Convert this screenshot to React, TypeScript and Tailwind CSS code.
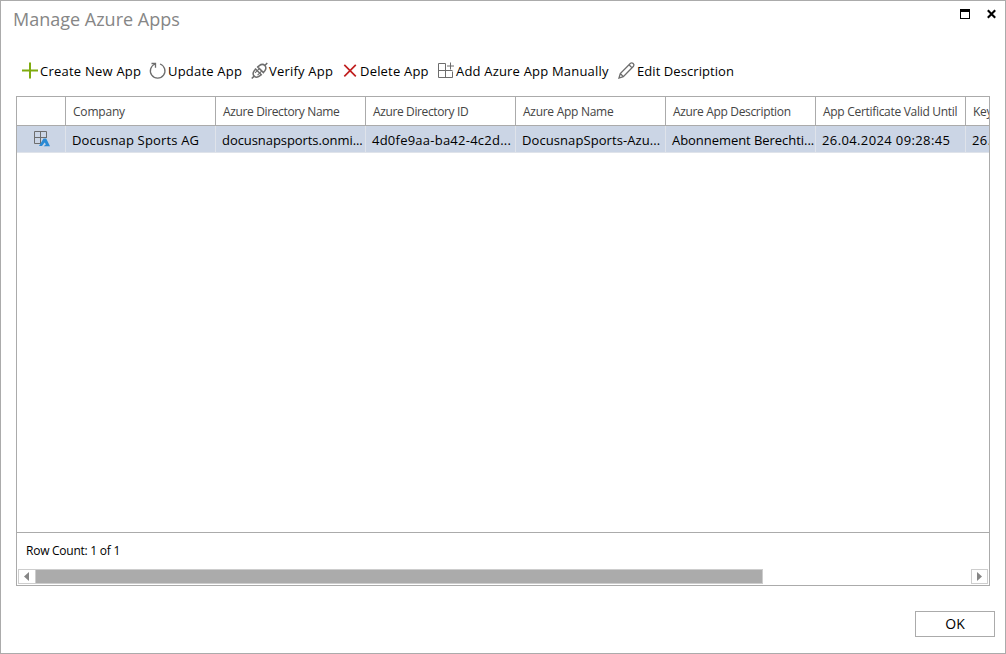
import type { ReactNode } from 'react';
import { clsx } from 'clsx';

type Action = { label: string; icon: ReactNode; iconClass: string; textClass: string };

type Column = { title: string; value: string; titleClass?: string; valueClass?: string };

const actions: Action[] = [
  { label: 'Create New App', icon: <PlusIcon />, iconClass: 'w-[19px]', textClass: 'w-[109px] tracking-[0.23px]' },
  { label: 'Update App', icon: <RefreshIcon />, iconClass: 'w-[19px]', textClass: 'w-[83px] tracking-[0.2px]' },
  { label: 'Verify App', icon: <PlugIcon />, iconClass: 'w-[18px]', textClass: 'w-[73px] tracking-[0.2px]' },
  { label: 'Delete App', icon: <CrossIcon />, iconClass: 'w-[18px]', textClass: 'w-[77px] tracking-[0.2px]' },
  { label: 'Add Azure App Manually', icon: <GridPlusIcon />, iconClass: 'w-[19px]', textClass: 'w-[162px] tracking-[0.19px]' },
  { label: 'Edit Description', icon: <PencilIcon />, iconClass: 'w-[19px]', textClass: 'w-[110px] tracking-[0.07px]' },
];

const columns: Column[] = [
  { title: 'Company', value: 'Docusnap Sports AG', titleClass: 'tracking-[-0.2px]', valueClass: 'tracking-[0.16px]' },
  { title: 'Azure Directory Name', value: 'docusnapsports.onmi...', titleClass: 'tracking-[-0.36px]', valueClass: 'tracking-[-0.07px]' },
  { title: 'Azure Directory ID', value: '4d0fe9aa-ba42-4c2d...', titleClass: 'tracking-[-0.38px]', valueClass: 'tracking-[0.24px]' },
  { title: 'Azure App Name', value: 'DocusnapSports-Azu...', titleClass: 'tracking-[-0.28px]', valueClass: 'tracking-[0.08px]' },
  { title: 'Azure App Description', value: 'Abonnement Berechti...', titleClass: 'tracking-[-0.34px]', valueClass: 'tracking-[-0.05px]' },
  { title: 'App Certificate Valid Until', value: '26.04.2024 09:28:45', titleClass: 'tracking-[-0.3px]', valueClass: 'tracking-[0.38px]' },
  { title: 'Key Valid Until', value: '26.04.2024 09:28:45', titleClass: 'tracking-[-0.3px]', valueClass: 'tracking-[0.38px]' },
];

export default function App() {
  return (
    <div className="flex h-[654px] w-[1006px] flex-col overflow-hidden border border-[#ababab] bg-white font-['Open_Sans','Noto_Sans',sans-serif] text-[13px] text-black">
      <TitleBar />
      <Toolbar />
      <AppGrid />
      <footer className="mt-[25px] flex justify-end pr-[10px]">
        <button className="h-[26px] w-[80px] border border-[#ababab] bg-white text-[14px] leading-[24px]">OK</button>
      </footer>
    </div>
  );
}

function TitleBar() {
  return (
    <header className="flex h-[38px] shrink-0 items-start justify-between pl-[12px]">
      <h1 className="pt-[6px] text-[18px] leading-6 text-[#868686]">Manage Azure Apps</h1>
      <div className="flex gap-[17px] pt-[8px] pr-[9px]">
        <button aria-label="Maximize">
          <svg className="block" width="10" height="10" shapeRendering="crispEdges">
            <path d="M.5 .5h9v9h-9z" fill="none" stroke="#000" />
            <path d="M0 0h10v3H0z" />
          </svg>
        </button>
        <button aria-label="Close">
          <svg className="block" width="9" height="10" viewBox="0 0 9 10">
            <path d="M.8 1.300l7.400 7.400M8.200 1.300L.8 8.700" stroke="#000" strokeWidth="2.100" />
          </svg>
        </button>
      </div>
    </header>
  );
}

function Toolbar() {
  return (
    <nav className="flex h-[57px] shrink-0 items-start pt-[22px] pl-[20px]">
      {actions.map((a) => (
        <button key={a.label} className="flex h-[20px] items-center text-left">
          <span className={clsx('shrink-0', a.iconClass)}>{a.icon}</span>
          <span className={clsx('shrink-0 whitespace-nowrap leading-5', a.textClass)}>{a.label}</span>
        </button>
      ))}
    </nav>
  );
}

function AppGrid() {
  return (
    <section className="ml-[15px] flex h-[490px] w-[974px] shrink-0 flex-col overflow-hidden border border-[#ababab]">
      <div className="flex h-[29px] shrink-0 overflow-hidden border-b border-[#ababab] text-[12px] text-[#444]">
        <div className="w-[49px] shrink-0 border-r border-[#ababab]" />
        {columns.map((c) => (
          <div
            key={c.title}
            className="w-[150px] shrink-0 whitespace-nowrap border-r border-[#ababab] pl-[7px] leading-[29px]"
          >
            <span className={c.titleClass}>{c.title}</span>
          </div>
        ))}
      </div>
      <div className="flex h-[27px] shrink-0 overflow-hidden border-b border-[#dfe3ea] bg-[#cbd5e5]">
        <div className="flex w-[49px] shrink-0 items-center justify-center border-r border-[#dfe3ea] pl-[2px]">
          <AzureAppIcon />
        </div>
        {columns.map((c) => (
          <div
            key={c.title}
            className="w-[150px] shrink-0 whitespace-nowrap border-r border-[#dfe3ea] pl-[6px] leading-[28px]"
          >
            <span className={c.valueClass}>{c.value}</span>
          </div>
        ))}
      </div>
      <div className="flex-1" />
      <div className="h-[37px] shrink-0 border-t border-[#ababab] pl-[9px] text-[12px] leading-[36px]">
        <span className="tracking-[-0.25px]">Row Count: 1 of 1</span>
      </div>
      <ScrollBar />
    </section>
  );
}

function ScrollBar() {
  return (
    <div className="mx-px mb-px flex h-[15px] shrink-0">
      <button aria-label="Scroll left" className="w-[17px] border border-r-0 border-[#cdcdcd]">
        <svg className="ml-[5px] block" width="5" height="9">
          <path d="M5 0v9L0 4.500z" fill="#868686" />
        </svg>
      </button>
      <div className="w-[728px] border border-[#cdcdcd] bg-[#ababab]" />
      <div className="flex-1" />
      <button aria-label="Scroll right" className="w-[17px] border border-[#cdcdcd]">
        <svg className="ml-[5px] block" width="5" height="9">
          <path d="M0 0v9l5-4.500z" fill="#868686" />
        </svg>
      </button>
    </div>
  );
}

/* Toolbar icons, all on a 17px grid */

function Icon({ children, color = '#6d6d6d' }: { children: ReactNode; color?: string }) {
  return (
    <svg className="relative -top-px block overflow-visible" width="17" height="17" viewBox="0 0 17 17" fill="none" stroke={color}>
      {children}
    </svg>
  );
}

function PlusIcon() {
  return (
    <Icon color="#7fab0f">
      <path d="M9 .5v16M1 8.500h16" strokeWidth="2" />
    </Icon>
  );
}

function RefreshIcon() {
  return (
    <Icon>
      <path d="M11 2A7.300 7.300 0 1 1 6.300 2" strokeWidth="1.300" />
      <path d="M2.500 1.500h4v4.200" strokeWidth="1.300" />
    </Icon>
  );
}

function PlugIcon() {
  return (
    <Icon>
      <g transform="translate(8.500 8.800) rotate(-45)" strokeWidth="1.500">
        <path d="M-11 0h3.500M7.500 0H11" />
        <path d="M-1.500-4.800v9.600M-1.500-3.800h-2q-4 .6-4 3.800t4 3.800h2" />
        <path d="M1.500-4.800v9.600M1.500-3.800h2q4 .6 4 3.800t-4 3.800h-2" />
        <path d="M-4.500-1.700h3M-4.500 1.700h3M-1.500-1.700h3M-1.500 1.700h3" strokeWidth="1" />
      </g>
    </Icon>
  );
}

function CrossIcon() {
  return (
    <Icon color="#c11f1f">
      <path d="M2.300 2.800l11.500 11.500M13.800 2.800L2.300 14.300" strokeWidth="1.700" />
    </Icon>
  );
}

function GridPlusIcon() {
  return (
    <Icon>
      <path d="M8.500 1H1.500v14h14V9M1.500 8h14M8.500 1v14M13.500 0v7M10 3.500h7" transform="translate(0 .5)" />
    </Icon>
  );
}

function PencilIcon() {
  return (
    <Icon>
      <path
        d="M1 16l1.300-4.500L12.500 1.300q1.300-1 2.700.3t.3 2.700L5.300 14.600zM11 2.800l3.100 3.100M2.300 11.500l3 3.100"
        strokeWidth="1.300"
      />
    </Icon>
  );
}

function AzureAppIcon() {
  return (
    <svg className="block" width="16" height="16" viewBox="0 0 16 16">
      <path d="M8 12.500H.5V.5h12V7M6.500 .5v12M.5 6.500h12" fill="none" stroke="#6d6d6d" />
      <path d="M9.500 7.500L5 15h3l2.600-3.600 1.300 1.900-2.200 1.900H16L12.200 7.500z" fill="#2a8ad4" />
    </svg>
  );
}
